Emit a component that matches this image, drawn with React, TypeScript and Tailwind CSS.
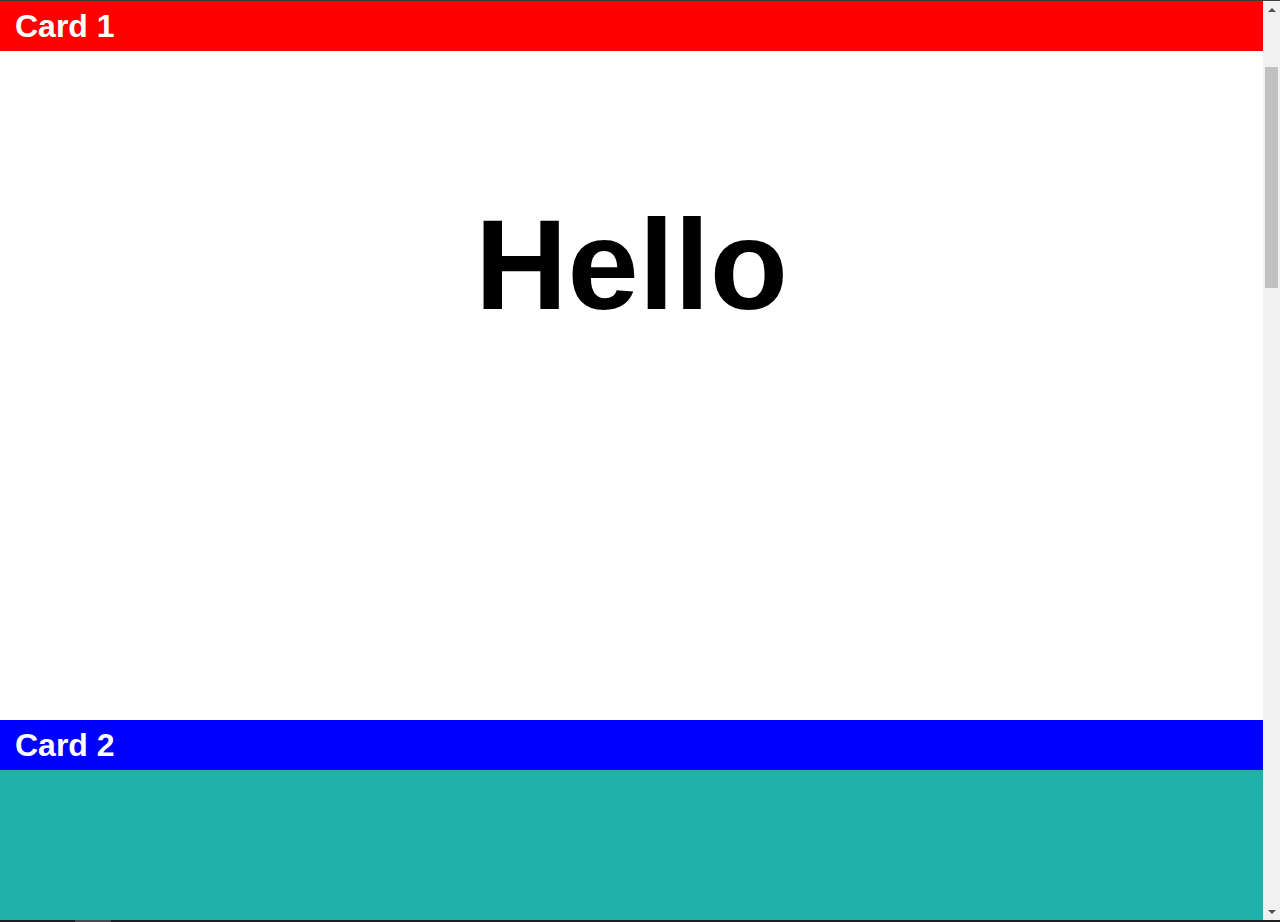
import React from 'react';

const cards = [
  { title: 'Card 1', head: 'bg-[#ff0000]', body: 'bg-white h-[669px]', content: 'Hello' },
  { title: 'Card 2', head: 'bg-[#0000ff]', body: 'bg-[#20b2aa] h-[150px]', content: '' },
];

const Scrollbar: React.FC = () => (
  <div className="w-[17px] shrink-0 bg-[#f1f1f1] flex flex-col items-center">
    <div className="h-[17px] w-full flex items-center justify-center">
      <div className="w-0 h-0 border-l-[4px] border-r-[4px] border-b-[4px] border-l-transparent border-r-transparent border-b-[#505050]" />
    </div>
    <div className="h-[49px]" />
    <div className="w-[13px] h-[221px] bg-[#c1c1c1]" />
    <div className="flex-1" />
    <div className="h-[17px] w-full flex items-center justify-center">
      <div className="w-0 h-0 border-l-[4px] border-r-[4px] border-t-[4px] border-l-transparent border-r-transparent border-t-[#505050]" />
    </div>
  </div>
);

export default function App() {
  return (
    <div className="h-[922px] w-[1280px] flex flex-col overflow-hidden bg-white" style={{ fontFamily: '"Liberation Sans", Arial, sans-serif' }}>
      <div className="h-px bg-[#3c3c3c]" />
      <div className="flex flex-1 min-h-0">
        <main className="flex-1 flex flex-col overflow-hidden">
          {cards.map((c) => (
            <section key={c.title} className="shrink-0">
              <div className={`${c.head} h-[50px] flex items-center px-[15px]`}>
                <h2 className="text-white font-bold text-[32px] leading-none">{c.title}</h2>
              </div>
              <div className={c.body}>
                {c.content && (
                  <h1 className="text-center font-bold text-[128px] text-black pt-[118px] leading-normal">{c.content}</h1>
                )}
              </div>
            </section>
          ))}
        </main>
        <Scrollbar />
      </div>
      <div className="h-[2px] bg-[#1e1e1e] flex">
        <div className="ml-[75px] w-[36px] bg-[#4a4a4a]" />
      </div>
    </div>
  );
}
